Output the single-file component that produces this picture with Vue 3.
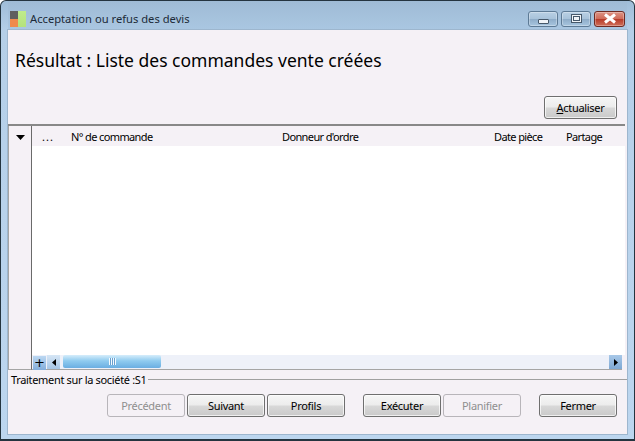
<script setup>
const leftButtons = [
  { label: 'Précédent', disabled: true },
  { label: 'Suivant', disabled: false },
  { label: 'Profils', disabled: false },
]
const midButtons = [
  { label: 'Exécuter', disabled: false },
  { label: 'Planifier', disabled: true },
]
</script>

<template>
  <div class="window">
    <header class="titlebar">
      <div class="appicon">
        <span class="i1"></span><span class="i2"></span><span class="i3"></span>
      </div>
      <span class="wintitle">Acceptation ou refus des devis</span>
      <div class="controls">
        <div class="ctl"><span class="minglyph"></span></div>
        <div class="ctl"><span class="maxglyph"></span></div>
        <div class="ctl close">
          <svg width="16" height="11" viewBox="0 0 16 11"><path d="M3 1.5L13 9.5M13 1.5L3 9.5" stroke="#fff" stroke-width="3" fill="none"/></svg>
        </div>
      </div>
    </header>
    <main class="content">
      <h1 class="heading">Résultat : Liste des commandes vente créées</h1>
      <div class="toolbar">
        <button class="btn refresh"><u>A</u>ctualiser</button>
      </div>
      <section class="grid">
        <div class="rowhead">
          <div class="menu"><svg width="9" height="5" viewBox="0 0 9 5"><path d="M0 0H9L4.5 5Z" fill="#000"/></svg></div>
          <div class="plus">+</div>
        </div>
        <div class="gridmain">
          <div class="cols">
            <span class="c0">...</span>
            <span class="c1">N° de commande</span>
            <span class="c2">Donneur d'ordre</span>
            <span class="c3">Date pièce</span>
            <span class="c4">Partage</span>
          </div>
          <div class="rows"></div>
          <div class="hscroll">
            <div class="arrow"><svg width="4" height="7" viewBox="0 0 4 7"><path d="M4 0V7L0 3.5Z" fill="#000"/></svg></div>
            <div class="track">
              <div class="thumb"><span class="grip"></span></div>
            </div>
            <div class="arrow right"><svg width="4" height="7" viewBox="0 0 4 7"><path d="M0 0V7L4 3.5Z" fill="#000"/></svg></div>
          </div>
        </div>
      </section>
      <div class="legend"><span>Traitement sur la société :S1</span><i></i></div>
      <footer class="actions">
        <div class="group">
          <button v-for="b in leftButtons" :key="b.label" class="btn" :disabled="b.disabled">{{ b.label }}</button>
        </div>
        <div class="group">
          <button v-for="b in midButtons" :key="b.label" class="btn" :disabled="b.disabled">{{ b.label }}</button>
        </div>
        <button class="btn">Fermer</button>
      </footer>
    </main>
  </div>
</template>

<style scoped>
.window {
  box-sizing: border-box;
  width: 635px;
  height: 441px;
  padding: 0 7px 5px;
  border: 1px solid #24343f;
  border-bottom-width: 2px;
  border-radius: 6px 6px 0 0;
  background: linear-gradient(180deg, #9fbdd8 0, #b5cfe8 30px, #bcd6ef 100%);
  display: flex;
  flex-direction: column;
  font-family: "Noto Sans", "DejaVu Sans", sans-serif;
  font-size: 11px;
  color: #000;
  overflow: hidden;
}
.titlebar {
  box-sizing: border-box;
  height: 29px;
  padding-top: 6px;
  flex: none;
  display: flex;
  align-items: center;
  background: linear-gradient(180deg, #9fbbd5 0, #aac7e2 100%);
}
.appicon {
  width: 16px;
  height: 16px;
  margin: 0 4px 0 2px;
  position: relative;
}
.appicon span { position: absolute; }
.i1 { left: 0; top: 0; width: 8px; height: 8px; background: #5f5f5f; }
.i2 { left: 0; top: 8px; width: 8px; height: 8px; background: #ef8a4c; }
.i3 { left: 8px; top: 0; width: 8px; height: 16px; background: linear-gradient(180deg, #c0ec8c, #b4e27c); }
.wintitle {
  font-size: 11.2px;
  color: #1c2a38;
  white-space: nowrap;
}
.controls {
  margin-left: auto;
  margin-right: 2px;
  margin-top: 0;
  display: flex;
  gap: 3px;
}
.ctl {
  box-sizing: border-box;
  width: 30px;
  height: 16px;
  border: 1px solid #5d7a95;
  border-radius: 3px;
  background: linear-gradient(180deg, #b9d0e4 0, #a7c2da 50%, #8eacc8 51%, #a7c5df 100%);
  box-shadow: inset 0 0 0 1px rgba(255,255,255,.3);
  display: flex;
  align-items: center;
  justify-content: center;
}
.ctl.close {
  width: 31px;
  border-color: #6e2a22;
  background: linear-gradient(180deg, #dc9384 0, #cf6a58 50%, #b73a28 51%, #cf6f5a 100%);
}
.minglyph {
  box-sizing: border-box;
  width: 11px;
  height: 5px;
  margin-top: 5px;
  background: #f0f4f8;
  border: 1px solid #46586a;
  border-radius: 1px;
}
.maxglyph {
  box-sizing: border-box;
  width: 11px;
  height: 9px;
  border: 1px solid #46586a;
  background: #f0f4f8;
  box-shadow: inset 0 0 0 1px #f0f4f8, inset 0 0 0 2px #46586a;
}
.content {
  flex: 1;
  min-height: 0;
  background: #f5f1f6;
  display: flex;
  flex-direction: column;
  box-shadow: 0 0 0 1px #9db6ce;
}
.heading {
  margin: 18px 0 0 7px;
  height: 24px;
  font-size: 17.5px;
  line-height: 24px;
  font-weight: 400;
  white-space: nowrap;
}
.toolbar {
  margin-top: 24px;
  padding-right: 10px;
  display: flex;
  justify-content: flex-end;
}
.btn {
  box-sizing: border-box;
  width: 78px;
  height: 23px;
  padding: 0;
  border: 1px solid #6f6f6f;
  border-radius: 3px;
  background: linear-gradient(180deg, #f6f6f6 0, #ececec 48%, #d8d8d8 52%, #c9c9c9 100%);
  box-shadow: inset 0 0 0 1px rgba(255,255,255,.7);
  font: inherit;
  letter-spacing: -0.3px;
  color: #000;
}
.btn:disabled {
  border-color: #b8b5ba;
  background: #f5f1f6;
  box-shadow: none;
  color: #8f8f8f;
}
.refresh { width: 73px; }
.grid {
  margin-top: 5px;
  height: 244px;
  flex: none;
  margin-right: 2px;
  display: flex;
  border-top: 2px solid #888;
}
.rowhead {
  width: 22px;
  flex: none;
  border-right: 1px solid #6a6a6a;
  border-left: 1px solid #a5a5a5;
  border-bottom: 1px solid #a5a5a5;
  display: flex;
  flex-direction: column;
  position: relative;
}
.menu {
  height: 22px;
  display: flex;
  align-items: center;
  justify-content: center;
}
.plus {
  position: absolute;
  right: -15px;
  bottom: -1px;
  width: 13px;
  height: 14px;
  background: linear-gradient(180deg, #bcd8f2, #84aedb);
  font: 400 13px/13px "DejaVu Sans", sans-serif;
  text-align: center;
  z-index: 1;
}
.gridmain {
  flex: 1;
  min-width: 0;
  display: flex;
  flex-direction: column;
}
.cols {
  height: 20px;
  flex: none;
  display: flex;
  align-items: center;
  white-space: nowrap;
  background: #f5f1f6;
  font-size: 11px;
  letter-spacing: -0.62px;
  margin-right: 2px;
}
.c0 { width: 39px; padding-left: 10px; box-sizing: border-box; letter-spacing: 1px; }
.c1 { width: 211px; }
.c2 { width: 212px; }
.c3 { width: 72px; }
.rows { flex: 1; background: #fff; }
.hscroll {
  box-sizing: border-box;
  height: 15px;
  flex: none;
  display: flex;
  background: #eef1f9;
  padding-left: 15px;
  margin-right: 3px;
  border-bottom: 1px solid #a5a5a5;
}
.arrow {
  width: 13px;
  flex: none;
  display: flex;
  align-items: center;
  justify-content: center;
  background: linear-gradient(180deg, #d6e6f5, #a6c6e6);
}
.arrow.right {
  background: linear-gradient(180deg, #a8c8e8, #7fa9d4);
}
.track { flex: 1; padding-left: 3px; }
.thumb {
  width: 98px;
  height: 13px;
  border-radius: 2px;
  background: linear-gradient(180deg, #d6edfb 0, #8fcbef 45%, #6aaee2 100%);
  display: flex;
  align-items: center;
  justify-content: center;
}
.grip {
  width: 7px;
  height: 7px;
  background: repeating-linear-gradient(90deg, #f4fbff 0 1px, #6ba0cf 1px 2px);
}
.legend {
  margin-top: 2px;
  padding-left: 3px;
  height: 15px;
  flex: none;
  display: flex;
  align-items: center;
  white-space: nowrap;
  font-size: 11px;
  letter-spacing: -0.33px;
}
.legend i {
  flex: 1;
  height: 1px;
  margin-left: 1px;
  background: #a0a0a0;
}
.actions {
  margin-top: 7px;
  padding-right: 10px;
  display: flex;
  justify-content: flex-end;
  gap: 18px;
}
.group { display: flex; gap: 2px; }
</style>
